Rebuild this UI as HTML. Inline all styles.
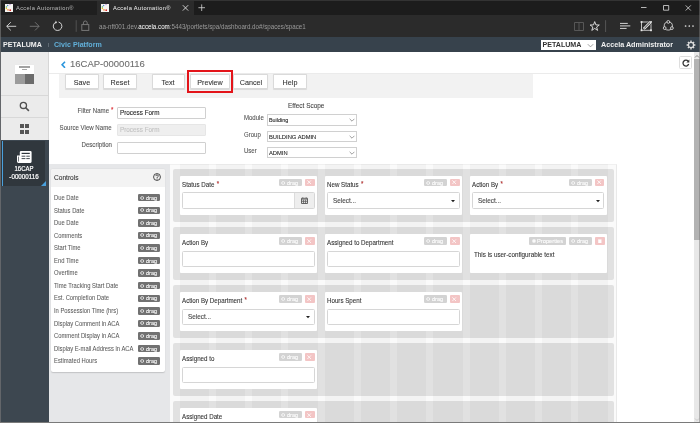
<!DOCTYPE html>
<html><head><meta charset="utf-8"><style>
*{margin:0;padding:0;box-sizing:border-box}
html,body{width:700px;height:423px;overflow:hidden;background:#fff;font-family:"Liberation Sans",sans-serif;position:relative}
.a{position:absolute}
.t{position:absolute;white-space:nowrap;line-height:1}
body{will-change:transform}
</style></head><body>
<div class="a" style="left:0.00px;top:0.00px;width:700.00px;height:15.00px;background:#1c1c1c;"></div>
<div class="a" style="left:0.00px;top:0.00px;width:700.00px;height:1.00px;background:#333;"></div>
<div class="a" style="left:1.00px;top:1.00px;width:96.00px;height:14.00px;background:#1f1f1f;"></div>
<div class="a" style="left:97.00px;top:1.00px;width:97.00px;height:14.00px;background:#2b2b2b;"></div>
<div class="a" style="left:0.00px;top:15.00px;width:700.00px;height:22.00px;background:#2b2b2b;"></div>
<div class="a" style="left:5.00px;top:4.00px;width:8.00px;height:8.00px;background:#f7f5f2;"></div>
<svg class="a" style="left:5px;top:4px" width="8" height="8" viewBox="0 0 8 8"><circle cx="2.6" cy="1.6" r="0.75" fill="#5a8ad0"/><circle cx="1.4" cy="3.0" r="0.75" fill="#4cb060"/><circle cx="1.4" cy="4.5" r="0.75" fill="#f0c020"/><circle cx="3.0" cy="5.9" r="0.8" fill="#f09040"/><circle cx="5.2" cy="6.2" r="0.85" fill="#e02020"/><circle cx="5.0" cy="0.6" r="0.6" fill="#a070d0"/></svg>
<div class="a" style="left:101.00px;top:4.00px;width:8.00px;height:8.00px;background:#f7f5f2;"></div>
<svg class="a" style="left:101px;top:4px" width="8" height="8" viewBox="0 0 8 8"><circle cx="2.6" cy="1.6" r="0.75" fill="#5a8ad0"/><circle cx="1.4" cy="3.0" r="0.75" fill="#4cb060"/><circle cx="1.4" cy="4.5" r="0.75" fill="#f0c020"/><circle cx="3.0" cy="5.9" r="0.8" fill="#f09040"/><circle cx="5.2" cy="6.2" r="0.85" fill="#e02020"/><circle cx="5.0" cy="0.6" r="0.6" fill="#a070d0"/></svg>
<div class="t" style="left:16.00px;top:5.20px;font-size:5.985px;color:#bdbdbd;font-weight:normal;transform:scaleX(0.9524);transform-origin:0 0;letter-spacing:0.38px">Accela Automation®</div>
<div class="t" style="left:112.80px;top:5.20px;font-size:5.985px;color:#f2f2f2;font-weight:normal;transform:scaleX(0.9524);transform-origin:0 0;letter-spacing:0.38px">Accela Automation®</div>
<svg class="a" style="left:0;top:0" width="700" height="37" viewBox="0 0 700 37">
<g fill="none" stroke="#dedede" stroke-width="0.9">
<path d="M182.8 5.2L188.2 10.6M188.2 5.2L182.8 10.6"/>
<path d="M201.7 4.4V11M198.4 7.7H205" stroke-width="0.75"/>
<path d="M641 7.5H646.5" stroke-width="0.8"/>
<path d="M663.5 5.5H668.7V10.2H663.5Z" stroke-width="0.8"/>
<path d="M685.7 5.4L690.8 10.5M690.8 5.4L685.7 10.5" stroke-width="0.8"/>
<path d="M16.2 26.3H6.8M10.8 22.2L6.7 26.3L10.8 30.4"/>
</g>
<path d="M29.8 26.3H39M35 22.2L39.1 26.3L35 30.4" fill="none" stroke="#767676" stroke-width="0.9"/>
<path d="M56.2 22.1A4.3 4.3 0 1 0 58.6 22.0" fill="none" stroke="#dcdcdc" stroke-width="0.95"/>
<path d="M55.3 21.2L56.8 22.2L55.6 23.6" fill="none" stroke="#dcdcdc" stroke-width="0.8"/>
<path d="M76.2 20.2V31.8" stroke="#525252" stroke-width="1"/>
<g fill="none" stroke="#7a7a7a" stroke-width="0.95"><rect x="81.8" y="24.6" width="7" height="5.8"/><path d="M83.4 24.6V22.9A1.9 1.9 0 0 1 87.2 22.9V24.6"/></g>
<g fill="none" stroke="#5c5c5c" stroke-width="0.9"><path d="M574.5 22.5H583.5V30.5H574.5ZM579 22.5V30.5"/></g>
<path d="M594.7 21.6L595.9 24.9L599.3 25L596.6 27L597.6 30.4L594.7 28.4L591.8 30.4L592.8 27L590.1 25L593.5 24.9Z" fill="none" stroke="#e8e8e8" stroke-width="0.9"/>
<path d="M605.6 20.2V32" stroke="#555" stroke-width="1"/>
<path d="M620 23.4H627.8M620 25.9H630.3M620 28.4H626.6" stroke="#e8e8e8" stroke-width="0.9"/>
<g fill="none" stroke="#e8e8e8" stroke-width="0.8"><path d="M641.5 22V30.3H651V22Z"/></g>
<g fill="#e8e8e8"><rect x="640.6" y="21.1" width="1.8" height="1.8"/><rect x="650.1" y="21.1" width="1.8" height="1.8"/><rect x="640.6" y="29.4" width="1.8" height="1.8"/><rect x="650.1" y="29.4" width="1.8" height="1.8"/></g>
<path d="M643.8 28.8L650.6 22" stroke="#2b2b2b" stroke-width="3.6"/>
<path d="M643.8 28.8L650.6 22" stroke="#e8e8e8" stroke-width="2.6"/>
<path d="M644.4 28.2L650 22.6" stroke="#2b2b2b" stroke-width="1"/>
<circle cx="668.3" cy="26" r="4.1" fill="none" stroke="#e8e8e8" stroke-width="0.8"/>
<g fill="#2b2b2b" stroke="#e8e8e8" stroke-width="0.8"><circle cx="668.3" cy="21.9" r="1.4"/><circle cx="664.7" cy="28.1" r="1.4"/><circle cx="671.9" cy="28.1" r="1.4"/></g>
<g fill="#e0e0e0"><circle cx="685.6" cy="26" r="0.85"/><circle cx="689.3" cy="26" r="0.85"/><circle cx="693" cy="26" r="0.85"/></g>
</svg>
<div class="t" style="left:98.60px;top:24.20px;font-size:6.542px;color:#9a9a9a;font-weight:normal;transform:scaleX(0.9524);transform-origin:0 0;">aa-nft001.dev.<span style="color:#fff">accela.com</span>:5443/portlets/spa/dashboard.do#/spaces/space1</div>
<div class="a" style="left:0.00px;top:37.00px;width:700.00px;height:15.40px;background:#37424c;"></div>
<div class="t" style="left:3.00px;top:42.20px;font-size:7.100px;color:#f0f0f0;font-weight:bold;">PETALUMA</div>
<div class="a" style="left:48.00px;top:42.50px;width:0.80px;height:4.20px;background:#5f6a73;"></div>
<div class="t" style="left:54.00px;top:42.20px;font-size:7.100px;color:#62b0da;font-weight:bold;">Civic Platform</div>
<div class="a" style="left:541.00px;top:40.00px;width:54.50px;height:9.80px;background:#fff;"></div>
<div class="t" style="left:542.50px;top:42.20px;font-size:7.100px;color:#333;font-weight:bold;">PETALUMA</div>
<svg class="a" style="left:587px;top:42.5px" width="7" height="5" viewBox="0 0 7 5"><path d="M0.8 1.2L3.5 3.9L6.2 1.2" fill="none" stroke="#888" stroke-width="0.8"/></svg>
<div class="t" style="left:601.00px;top:41.20px;font-size:7.200px;color:#f0f0f0;font-weight:bold;">Accela Administrator</div>
<svg class="a" style="left:685.6px;top:40px" width="10" height="10" viewBox="0 0 10 10"><g fill="none" stroke="#dcdcdc"><circle cx="5" cy="5" r="2.6" stroke-width="1.3"/><path d="M5 0.6V2.2M5 7.8V9.4M0.6 5H2.2M7.8 5H9.4M1.9 1.9L3.1 3.1M6.9 6.9L8.1 8.1M1.9 8.1L3.1 6.9M6.9 3.1L8.1 1.9" stroke-width="1.4"/></g></svg>
<div class="a" style="left:0.00px;top:52.00px;width:49.00px;height:370.00px;background:#3d4750;"></div>
<div class="a" style="left:1.00px;top:52.00px;width:47.50px;height:87.50px;background:#ebebeb;"></div>
<div class="a" style="left:48.00px;top:52.00px;width:1.00px;height:87.50px;background:#d6d6d6;"></div>
<div class="a" style="left:1.00px;top:95.00px;width:47.00px;height:1.00px;background:#d8d8d8;"></div>
<div class="a" style="left:1.00px;top:117.00px;width:47.00px;height:1.00px;background:#d8d8d8;"></div>
<div class="a" style="left:15.00px;top:64.60px;width:19.40px;height:19.60px;background:#fff;box-shadow:0 0 0.5px rgba(0,0,0,.15)"></div>
<div class="a" style="left:15.00px;top:73.90px;width:9.70px;height:10.30px;background:#9b9b9b;"></div>
<div class="a" style="left:24.70px;top:73.90px;width:9.70px;height:10.30px;background:#6b6b6b;"></div>
<div class="a" style="left:19.20px;top:66.30px;width:11.00px;height:1.50px;background:#a2a2a2;"></div>
<div class="a" style="left:22.00px;top:69.40px;width:5.40px;height:0.90px;background:#a8a8a8;"></div>
<svg class="a" style="left:19px;top:101px" width="11" height="11" viewBox="0 0 11 11"><circle cx="4.4" cy="4.4" r="3.1" fill="none" stroke="#505050" stroke-width="1.3"/><path d="M6.7 6.7L9.9 9.9" stroke="#505050" stroke-width="1.6"/></svg>
<div class="a" style="left:20.00px;top:124.20px;width:4.00px;height:4.00px;background:#555;"></div>
<div class="a" style="left:20.00px;top:129.60px;width:4.00px;height:4.00px;background:#555;"></div>
<div class="a" style="left:25.40px;top:124.20px;width:4.00px;height:4.00px;background:#555;"></div>
<div class="a" style="left:25.40px;top:129.60px;width:4.00px;height:4.00px;background:#555;"></div>
<div class="a" style="left:1.00px;top:141.00px;width:44.00px;height:45.00px;background:#30373d;"></div>
<div class="a" style="left:1.50px;top:141.00px;width:1.60px;height:45.00px;background:#4aa0dc;"></div>
<svg class="a" style="left:40.5px;top:181px" width="5" height="5" viewBox="0 0 5 5"><path d="M5 0V5H0Z" fill="#4aa0dc"/></svg>
<svg class="a" style="left:16.8px;top:150.9px" width="15" height="12" viewBox="0 0 15 12"><path d="M2.8 1.3Q2.8 0 4.1 0H13.4Q14.6 0 14.6 1.3V10.6Q14.6 11.9 13.4 11.9H1.4Q0 11.9 0 10.5V4.6H2.8Z" fill="#fff"/><path d="M4.6 2.4H12.8" stroke="#30373d" stroke-width="1.2"/><path d="M4.6 5.2H8.4M9.3 5.2H12.8M4.6 7.6H8.4M9.3 7.6H12.8" stroke="#30373d" stroke-width="0.9"/><path d="M1.5 5.6V10.5" stroke="#30373d" stroke-width="0.7"/></svg>
<div class="t" style="left:-76.50px;width:200px;text-align:center;top:166.20px;font-size:6.300px;color:#fff;font-weight:normal;transform:scaleX(0.9524);transform-origin:50% 0;-webkit-text-stroke:0.2px #fff;">16CAP</div>
<div class="t" style="left:-75.90px;width:200px;text-align:center;top:174.20px;font-size:6.542px;color:#fff;font-weight:normal;transform:scaleX(0.9524);transform-origin:50% 0;-webkit-text-stroke:0.2px #fff;">-00000116</div>
<div class="a" style="left:49.00px;top:163.60px;width:121.00px;height:258.00px;background:#e6e7e9;"></div>
<svg class="a" style="left:59.5px;top:60.5px" width="7" height="7.5" viewBox="0 0 7 7.5"><path d="M5.0 0.7L2.1 3.75L5.0 6.8" fill="none" stroke="#2a95dc" stroke-width="1.6"/></svg>
<div class="t" style="left:70.00px;top:59.20px;font-size:9.500px;color:#6e6e6e;font-weight:normal;-webkit-text-stroke:0.1px #6e6e6e;">16CAP-00000116</div>
<div class="a" style="left:49.00px;top:73.00px;width:644.00px;height:1.00px;background:#ebebeb;"></div>
<div class="a" style="left:679.20px;top:56.30px;width:12.70px;height:12.70px;background:#fff;border:1px solid #dedede;border-radius:1.5px"></div>
<svg class="a" style="left:681.7px;top:59px" width="8" height="8" viewBox="0 0 8 8"><path d="M6.2 2.3A2.9 2.9 0 1 0 6.7 5" fill="none" stroke="#333" stroke-width="1.25"/><path d="M7.3 0.5V3.4H4.4Z" fill="#333"/></svg>
<div class="a" style="left:693.50px;top:52.00px;width:6.50px;height:370.00px;background:#e8e8e8;"></div>
<div class="a" style="left:693.80px;top:59.00px;width:6.20px;height:181.00px;background:#b3b3b3;"></div>
<svg class="a" style="left:694px;top:53.5px" width="6" height="5" viewBox="0 0 6 5"><path d="M1 3.5L3 1.5L5 3.5" fill="none" stroke="#6a6a6a" stroke-width="0.8"/></svg>
<svg class="a" style="left:694px;top:416.8px" width="6" height="5" viewBox="0 0 6 5"><path d="M1 1.5L3 3.5L5 1.5" fill="none" stroke="#bbb" stroke-width="0.7"/></svg>
<div class="a" style="left:59.00px;top:73.50px;width:474.00px;height:24.00px;background:#f2f2f2;"></div>
<div class="a" style="left:64.5px;top:74px;width:34.10px;height:15.2px;background:#fff;border:1px solid #dadada;border-radius:1px;box-shadow:0 0.6px 0.8px rgba(0,0,0,.10)"></div>
<div class="t" style="left:-18.45px;width:200px;text-align:center;top:79.20px;font-size:7.560px;color:#333;font-weight:normal;transform:scaleX(0.9524);transform-origin:50% 0;-webkit-text-stroke:0.09px #333;">Save</div>
<div class="a" style="left:103.4px;top:74px;width:33.50px;height:15.2px;background:#fff;border:1px solid #dadada;border-radius:1px;box-shadow:0 0.6px 0.8px rgba(0,0,0,.10)"></div>
<div class="t" style="left:20.15px;width:200px;text-align:center;top:79.20px;font-size:7.560px;color:#333;font-weight:normal;transform:scaleX(0.9524);transform-origin:50% 0;-webkit-text-stroke:0.09px #333;">Reset</div>
<div class="a" style="left:151.5px;top:74px;width:33.70px;height:15.2px;background:#fff;border:1px solid #dadada;border-radius:1px;box-shadow:0 0.6px 0.8px rgba(0,0,0,.10)"></div>
<div class="t" style="left:68.35px;width:200px;text-align:center;top:79.20px;font-size:7.560px;color:#333;font-weight:normal;transform:scaleX(0.9524);transform-origin:50% 0;-webkit-text-stroke:0.09px #333;">Text</div>
<div class="a" style="left:190.2px;top:74px;width:40.10px;height:15.2px;background:#fff;border:1px solid #dadada;border-radius:1px;box-shadow:0 0.6px 0.8px rgba(0,0,0,.10)"></div>
<div class="t" style="left:110.25px;width:200px;text-align:center;top:79.20px;font-size:7.560px;color:#333;font-weight:normal;transform:scaleX(0.9524);transform-origin:50% 0;-webkit-text-stroke:0.09px #333;">Preview</div>
<div class="a" style="left:233.2px;top:74px;width:35.20px;height:15.2px;background:#fff;border:1px solid #dadada;border-radius:1px;box-shadow:0 0.6px 0.8px rgba(0,0,0,.10)"></div>
<div class="t" style="left:150.80px;width:200px;text-align:center;top:79.20px;font-size:7.560px;color:#333;font-weight:normal;transform:scaleX(0.9524);transform-origin:50% 0;-webkit-text-stroke:0.09px #333;">Cancel</div>
<div class="a" style="left:273.2px;top:74px;width:33.80px;height:15.2px;background:#fff;border:1px solid #dadada;border-radius:1px;box-shadow:0 0.6px 0.8px rgba(0,0,0,.10)"></div>
<div class="t" style="left:190.10px;width:200px;text-align:center;top:79.20px;font-size:7.560px;color:#333;font-weight:normal;transform:scaleX(0.9524);transform-origin:50% 0;-webkit-text-stroke:0.09px #333;">Help</div>
<div class="a" style="left:187.00px;top:69.90px;width:45.60px;height:23.60px;background:transparent;border:2px solid #e3141a"></div>
<div class="t" style="right:590.70px;top:108.20px;font-size:6.405px;color:#555;font-weight:normal;transform:scaleX(0.9524);transform-origin:100% 0;-webkit-text-stroke:0.09px #555;">Filter Name</div>
<div class="t" style="left:111.20px;top:107.20px;font-size:6.405px;color:#d9262c;font-weight:normal;transform:scaleX(0.9524);transform-origin:0 0;-webkit-text-stroke:0.09px #d9262c;">*</div>
<div class="a" style="left:117.30px;top:107.00px;width:88.60px;height:11.60px;background:#fff;border:1px solid #d0d0d0;border-radius:1px"></div>
<div class="t" style="left:119.70px;top:110.20px;font-size:6.667px;color:#222;font-weight:normal;transform:scaleX(0.9524);transform-origin:0 0;-webkit-text-stroke:0.09px #222;">Process Form</div>
<div class="t" style="right:588.00px;top:125.20px;font-size:6.405px;color:#555;font-weight:normal;transform:scaleX(0.9524);transform-origin:100% 0;-webkit-text-stroke:0.09px #555;">Source View Name</div>
<div class="a" style="left:117.30px;top:124.20px;width:88.60px;height:11.80px;background:#efefef;border:1px solid #e6e6e6;border-radius:1px"></div>
<div class="t" style="left:119.70px;top:127.20px;font-size:6.667px;color:#c2c2c2;font-weight:normal;transform:scaleX(0.9524);transform-origin:0 0;-webkit-text-stroke:0.09px #c2c2c2;">Process Form</div>
<div class="t" style="right:588.00px;top:142.20px;font-size:6.405px;color:#555;font-weight:normal;transform:scaleX(0.9524);transform-origin:100% 0;-webkit-text-stroke:0.09px #555;">Description</div>
<div class="a" style="left:117.30px;top:142.20px;width:88.60px;height:12.10px;background:#fff;border:1px solid #d0d0d0;border-radius:1px"></div>
<div class="t" style="left:288.00px;top:103.20px;font-size:6.773px;color:#444;font-weight:normal;transform:scaleX(0.9524);transform-origin:0 0;-webkit-text-stroke:0.09px #444;">Effect Scope</div>
<div class="t" style="left:244.10px;top:115.20px;font-size:6.342px;color:#555;font-weight:normal;transform:scaleX(0.9524);transform-origin:0 0;-webkit-text-stroke:0.09px #555;">Module</div>
<div class="a" style="left:266.90px;top:114.30px;width:90.00px;height:11.30px;background:#fff;border:1px solid #d0d0d0"></div>
<div class="t" style="left:268.90px;top:118.20px;font-size:5.670px;color:#222;font-weight:normal;transform:scaleX(0.9524);transform-origin:0 0;-webkit-text-stroke:0.09px #222;">Building</div>
<svg class="a" style="left:349px;top:117.95px" width="6" height="4" viewBox="0 0 6 4"><path d="M0.6 0.8L3 3.2L5.4 0.8" fill="none" stroke="#777" stroke-width="0.7"/></svg>
<div class="t" style="left:244.10px;top:132.20px;font-size:6.342px;color:#555;font-weight:normal;transform:scaleX(0.9524);transform-origin:0 0;-webkit-text-stroke:0.09px #555;">Group</div>
<div class="a" style="left:266.90px;top:131.00px;width:90.00px;height:11.30px;background:#fff;border:1px solid #d0d0d0"></div>
<div class="t" style="left:268.90px;top:134.20px;font-size:6.090px;color:#222;font-weight:normal;transform:scaleX(0.9524);transform-origin:0 0;-webkit-text-stroke:0.09px #222;">BUILDING ADMIN</div>
<svg class="a" style="left:349px;top:134.65px" width="6" height="4" viewBox="0 0 6 4"><path d="M0.6 0.8L3 3.2L5.4 0.8" fill="none" stroke="#777" stroke-width="0.7"/></svg>
<div class="t" style="left:244.10px;top:148.20px;font-size:6.342px;color:#555;font-weight:normal;transform:scaleX(0.9524);transform-origin:0 0;-webkit-text-stroke:0.09px #555;">User</div>
<div class="a" style="left:266.90px;top:147.00px;width:90.00px;height:11.40px;background:#fff;border:1px solid #d0d0d0"></div>
<div class="t" style="left:268.90px;top:150.20px;font-size:6.090px;color:#222;font-weight:normal;transform:scaleX(0.9524);transform-origin:0 0;-webkit-text-stroke:0.09px #222;">ADMIN</div>
<svg class="a" style="left:349px;top:150.70px" width="6" height="4" viewBox="0 0 6 4"><path d="M0.6 0.8L3 3.2L5.4 0.8" fill="none" stroke="#777" stroke-width="0.7"/></svg>
<div class="a" style="left:51.00px;top:168.60px;width:113.80px;height:203.40px;background:#fff;border-radius:2px;box-shadow:0 0.6px 1.2px rgba(0,0,0,.16)"></div>
<div class="a" style="left:51.00px;top:168.60px;width:113.80px;height:18.20px;background:#f3f3f3;border-radius:2px 2px 0 0"></div>
<div class="t" style="left:54.00px;top:175.20px;font-size:6.930px;color:#333;font-weight:normal;transform:scaleX(0.9524);transform-origin:0 0;-webkit-text-stroke:0.09px #333;">Controls</div>
<svg class="a" style="left:152.6px;top:173.2px" width="8" height="8" viewBox="0 0 8 8"><circle cx="4" cy="4" r="3.45" fill="none" stroke="#222" stroke-width="0.8"/><path d="M2.85 3.1A1.2 1.15 0 1 1 4.5 4.1Q4.05 4.4 4.05 5.1" fill="none" stroke="#222" stroke-width="0.8"/><circle cx="4.05" cy="6.1" r="0.5" fill="#222"/></svg>
<div class="t" style="left:54.00px;top:195.20px;font-size:6.318px;color:#5a5a5a;font-weight:normal;transform:scaleX(0.9259);transform-origin:0 0;-webkit-text-stroke:0.05px #5a5a5a;">Due Date</div>
<div class="a" style="left:138.00px;top:194.10px;width:21.90px;height:7.40px;background:#717171;border-radius:1.2px"></div>
<svg class="a" style="left:139.60px;top:195.80px" width="4.4" height="4" viewBox="0 0 4.4 4"><ellipse cx="2.2" cy="2" rx="1.6" ry="1.35" fill="none" stroke="#fff" stroke-width="0.75"/></svg>
<div class="t" style="left:146.00px;top:196.20px;font-size:5.775px;color:#fff;font-weight:normal;transform:scaleX(0.9524);transform-origin:0 0;-webkit-text-stroke:0.09px #fff;">drag</div>
<div class="t" style="left:54.00px;top:208.20px;font-size:6.318px;color:#5a5a5a;font-weight:normal;transform:scaleX(0.9259);transform-origin:0 0;-webkit-text-stroke:0.05px #5a5a5a;">Status Date</div>
<div class="a" style="left:138.00px;top:206.66px;width:21.90px;height:7.40px;background:#717171;border-radius:1.2px"></div>
<svg class="a" style="left:139.60px;top:208.36px" width="4.4" height="4" viewBox="0 0 4.4 4"><ellipse cx="2.2" cy="2" rx="1.6" ry="1.35" fill="none" stroke="#fff" stroke-width="0.75"/></svg>
<div class="t" style="left:146.00px;top:208.20px;font-size:5.775px;color:#fff;font-weight:normal;transform:scaleX(0.9524);transform-origin:0 0;-webkit-text-stroke:0.09px #fff;">drag</div>
<div class="t" style="left:54.00px;top:220.20px;font-size:6.318px;color:#5a5a5a;font-weight:normal;transform:scaleX(0.9259);transform-origin:0 0;-webkit-text-stroke:0.05px #5a5a5a;">Due Date</div>
<div class="a" style="left:138.00px;top:219.22px;width:21.90px;height:7.40px;background:#717171;border-radius:1.2px"></div>
<svg class="a" style="left:139.60px;top:220.92px" width="4.4" height="4" viewBox="0 0 4.4 4"><ellipse cx="2.2" cy="2" rx="1.6" ry="1.35" fill="none" stroke="#fff" stroke-width="0.75"/></svg>
<div class="t" style="left:146.00px;top:221.20px;font-size:5.775px;color:#fff;font-weight:normal;transform:scaleX(0.9524);transform-origin:0 0;-webkit-text-stroke:0.09px #fff;">drag</div>
<div class="t" style="left:54.00px;top:233.20px;font-size:6.318px;color:#5a5a5a;font-weight:normal;transform:scaleX(0.9259);transform-origin:0 0;-webkit-text-stroke:0.05px #5a5a5a;">Comments</div>
<div class="a" style="left:138.00px;top:231.78px;width:21.90px;height:7.40px;background:#717171;border-radius:1.2px"></div>
<svg class="a" style="left:139.60px;top:233.48px" width="4.4" height="4" viewBox="0 0 4.4 4"><ellipse cx="2.2" cy="2" rx="1.6" ry="1.35" fill="none" stroke="#fff" stroke-width="0.75"/></svg>
<div class="t" style="left:146.00px;top:233.20px;font-size:5.775px;color:#fff;font-weight:normal;transform:scaleX(0.9524);transform-origin:0 0;-webkit-text-stroke:0.09px #fff;">drag</div>
<div class="t" style="left:54.00px;top:245.20px;font-size:6.318px;color:#5a5a5a;font-weight:normal;transform:scaleX(0.9259);transform-origin:0 0;-webkit-text-stroke:0.05px #5a5a5a;">Start Time</div>
<div class="a" style="left:138.00px;top:244.34px;width:21.90px;height:7.40px;background:#717171;border-radius:1.2px"></div>
<svg class="a" style="left:139.60px;top:246.04px" width="4.4" height="4" viewBox="0 0 4.4 4"><ellipse cx="2.2" cy="2" rx="1.6" ry="1.35" fill="none" stroke="#fff" stroke-width="0.75"/></svg>
<div class="t" style="left:146.00px;top:246.20px;font-size:5.775px;color:#fff;font-weight:normal;transform:scaleX(0.9524);transform-origin:0 0;-webkit-text-stroke:0.09px #fff;">drag</div>
<div class="t" style="left:54.00px;top:258.20px;font-size:6.318px;color:#5a5a5a;font-weight:normal;transform:scaleX(0.9259);transform-origin:0 0;-webkit-text-stroke:0.05px #5a5a5a;">End Time</div>
<div class="a" style="left:138.00px;top:256.90px;width:21.90px;height:7.40px;background:#717171;border-radius:1.2px"></div>
<svg class="a" style="left:139.60px;top:258.60px" width="4.4" height="4" viewBox="0 0 4.4 4"><ellipse cx="2.2" cy="2" rx="1.6" ry="1.35" fill="none" stroke="#fff" stroke-width="0.75"/></svg>
<div class="t" style="left:146.00px;top:259.20px;font-size:5.775px;color:#fff;font-weight:normal;transform:scaleX(0.9524);transform-origin:0 0;-webkit-text-stroke:0.09px #fff;">drag</div>
<div class="t" style="left:54.00px;top:270.20px;font-size:6.318px;color:#5a5a5a;font-weight:normal;transform:scaleX(0.9259);transform-origin:0 0;-webkit-text-stroke:0.05px #5a5a5a;">Overtime</div>
<div class="a" style="left:138.00px;top:269.46px;width:21.90px;height:7.40px;background:#717171;border-radius:1.2px"></div>
<svg class="a" style="left:139.60px;top:271.16px" width="4.4" height="4" viewBox="0 0 4.4 4"><ellipse cx="2.2" cy="2" rx="1.6" ry="1.35" fill="none" stroke="#fff" stroke-width="0.75"/></svg>
<div class="t" style="left:146.00px;top:271.20px;font-size:5.775px;color:#fff;font-weight:normal;transform:scaleX(0.9524);transform-origin:0 0;-webkit-text-stroke:0.09px #fff;">drag</div>
<div class="t" style="left:54.00px;top:283.20px;font-size:6.318px;color:#5a5a5a;font-weight:normal;transform:scaleX(0.9259);transform-origin:0 0;-webkit-text-stroke:0.05px #5a5a5a;">Time Tracking Start Date</div>
<div class="a" style="left:138.00px;top:282.02px;width:21.90px;height:7.40px;background:#717171;border-radius:1.2px"></div>
<svg class="a" style="left:139.60px;top:283.72px" width="4.4" height="4" viewBox="0 0 4.4 4"><ellipse cx="2.2" cy="2" rx="1.6" ry="1.35" fill="none" stroke="#fff" stroke-width="0.75"/></svg>
<div class="t" style="left:146.00px;top:284.20px;font-size:5.775px;color:#fff;font-weight:normal;transform:scaleX(0.9524);transform-origin:0 0;-webkit-text-stroke:0.09px #fff;">drag</div>
<div class="t" style="left:54.00px;top:295.20px;font-size:6.318px;color:#5a5a5a;font-weight:normal;transform:scaleX(0.9259);transform-origin:0 0;-webkit-text-stroke:0.05px #5a5a5a;">Est. Completion Date</div>
<div class="a" style="left:138.00px;top:294.58px;width:21.90px;height:7.40px;background:#717171;border-radius:1.2px"></div>
<svg class="a" style="left:139.60px;top:296.28px" width="4.4" height="4" viewBox="0 0 4.4 4"><ellipse cx="2.2" cy="2" rx="1.6" ry="1.35" fill="none" stroke="#fff" stroke-width="0.75"/></svg>
<div class="t" style="left:146.00px;top:296.20px;font-size:5.775px;color:#fff;font-weight:normal;transform:scaleX(0.9524);transform-origin:0 0;-webkit-text-stroke:0.09px #fff;">drag</div>
<div class="t" style="left:54.00px;top:308.20px;font-size:6.318px;color:#5a5a5a;font-weight:normal;transform:scaleX(0.9259);transform-origin:0 0;-webkit-text-stroke:0.05px #5a5a5a;">In Possession Time (hrs)</div>
<div class="a" style="left:138.00px;top:307.14px;width:21.90px;height:7.40px;background:#717171;border-radius:1.2px"></div>
<svg class="a" style="left:139.60px;top:308.84px" width="4.4" height="4" viewBox="0 0 4.4 4"><ellipse cx="2.2" cy="2" rx="1.6" ry="1.35" fill="none" stroke="#fff" stroke-width="0.75"/></svg>
<div class="t" style="left:146.00px;top:309.20px;font-size:5.775px;color:#fff;font-weight:normal;transform:scaleX(0.9524);transform-origin:0 0;-webkit-text-stroke:0.09px #fff;">drag</div>
<div class="t" style="left:54.00px;top:321.20px;font-size:6.318px;color:#5a5a5a;font-weight:normal;transform:scaleX(0.9259);transform-origin:0 0;-webkit-text-stroke:0.05px #5a5a5a;">Display Comment in ACA</div>
<div class="a" style="left:138.00px;top:319.70px;width:21.90px;height:7.40px;background:#717171;border-radius:1.2px"></div>
<svg class="a" style="left:139.60px;top:321.40px" width="4.4" height="4" viewBox="0 0 4.4 4"><ellipse cx="2.2" cy="2" rx="1.6" ry="1.35" fill="none" stroke="#fff" stroke-width="0.75"/></svg>
<div class="t" style="left:146.00px;top:321.20px;font-size:5.775px;color:#fff;font-weight:normal;transform:scaleX(0.9524);transform-origin:0 0;-webkit-text-stroke:0.09px #fff;">drag</div>
<div class="t" style="left:54.00px;top:333.20px;font-size:6.318px;color:#5a5a5a;font-weight:normal;transform:scaleX(0.9259);transform-origin:0 0;-webkit-text-stroke:0.05px #5a5a5a;">Comment Display in ACA</div>
<div class="a" style="left:138.00px;top:332.26px;width:21.90px;height:7.40px;background:#717171;border-radius:1.2px"></div>
<svg class="a" style="left:139.60px;top:333.96px" width="4.4" height="4" viewBox="0 0 4.4 4"><ellipse cx="2.2" cy="2" rx="1.6" ry="1.35" fill="none" stroke="#fff" stroke-width="0.75"/></svg>
<div class="t" style="left:146.00px;top:334.20px;font-size:5.775px;color:#fff;font-weight:normal;transform:scaleX(0.9524);transform-origin:0 0;-webkit-text-stroke:0.09px #fff;">drag</div>
<div class="t" style="left:54.00px;top:346.20px;font-size:6.318px;color:#5a5a5a;font-weight:normal;transform:scaleX(0.9259);transform-origin:0 0;-webkit-text-stroke:0.05px #5a5a5a;">Display E-mail Address in ACA</div>
<div class="a" style="left:138.00px;top:344.82px;width:21.90px;height:7.40px;background:#717171;border-radius:1.2px"></div>
<svg class="a" style="left:139.60px;top:346.52px" width="4.4" height="4" viewBox="0 0 4.4 4"><ellipse cx="2.2" cy="2" rx="1.6" ry="1.35" fill="none" stroke="#fff" stroke-width="0.75"/></svg>
<div class="t" style="left:146.00px;top:347.20px;font-size:5.775px;color:#fff;font-weight:normal;transform:scaleX(0.9524);transform-origin:0 0;-webkit-text-stroke:0.09px #fff;">drag</div>
<div class="t" style="left:54.00px;top:358.20px;font-size:6.318px;color:#5a5a5a;font-weight:normal;transform:scaleX(0.9259);transform-origin:0 0;-webkit-text-stroke:0.05px #5a5a5a;">Estimated Hours</div>
<div class="a" style="left:138.00px;top:357.38px;width:21.90px;height:7.40px;background:#717171;border-radius:1.2px"></div>
<svg class="a" style="left:139.60px;top:359.08px" width="4.4" height="4" viewBox="0 0 4.4 4"><ellipse cx="2.2" cy="2" rx="1.6" ry="1.35" fill="none" stroke="#fff" stroke-width="0.75"/></svg>
<div class="t" style="left:146.00px;top:359.20px;font-size:5.775px;color:#fff;font-weight:normal;transform:scaleX(0.9524);transform-origin:0 0;-webkit-text-stroke:0.09px #fff;">drag</div>
<div class="a" style="left:170.00px;top:163.60px;width:447.00px;height:258.00px;background:#fafafa;border-right:1px solid #e9e9e9;border-top:0.5px solid #f0f0f0"></div>
<div class="a" style="left:172.70px;top:168.80px;width:441.40px;height:52.90px;background:#e1e1e1;border-radius:2px"></div>
<div class="a" style="left:172.70px;top:227.00px;width:441.40px;height:52.90px;background:#e1e1e1;border-radius:2px"></div>
<div class="a" style="left:172.70px;top:285.20px;width:441.40px;height:52.90px;background:#e1e1e1;border-radius:2px"></div>
<div class="a" style="left:172.70px;top:343.30px;width:441.40px;height:52.90px;background:#e1e1e1;border-radius:2px"></div>
<div class="a" style="left:172.70px;top:400.90px;width:441.40px;height:52.90px;background:#e1e1e1;border-radius:2px"></div>
<div class="a" style="left:179.70px;top:163.60px;width:29.24px;height:258.00px;background:rgba(0,0,0,0.026);"></div>
<div class="a" style="left:215.94px;top:163.60px;width:29.24px;height:258.00px;background:rgba(0,0,0,0.026);"></div>
<div class="a" style="left:252.18px;top:163.60px;width:29.24px;height:258.00px;background:rgba(0,0,0,0.026);"></div>
<div class="a" style="left:288.42px;top:163.60px;width:29.24px;height:258.00px;background:rgba(0,0,0,0.026);"></div>
<div class="a" style="left:324.66px;top:163.60px;width:29.24px;height:258.00px;background:rgba(0,0,0,0.026);"></div>
<div class="a" style="left:360.90px;top:163.60px;width:29.24px;height:258.00px;background:rgba(0,0,0,0.026);"></div>
<div class="a" style="left:397.14px;top:163.60px;width:29.24px;height:258.00px;background:rgba(0,0,0,0.026);"></div>
<div class="a" style="left:433.38px;top:163.60px;width:29.24px;height:258.00px;background:rgba(0,0,0,0.026);"></div>
<div class="a" style="left:469.62px;top:163.60px;width:29.24px;height:258.00px;background:rgba(0,0,0,0.026);"></div>
<div class="a" style="left:505.86px;top:163.60px;width:29.24px;height:258.00px;background:rgba(0,0,0,0.026);"></div>
<div class="a" style="left:542.10px;top:163.60px;width:29.24px;height:258.00px;background:rgba(0,0,0,0.026);"></div>
<div class="a" style="left:578.34px;top:163.60px;width:29.24px;height:258.00px;background:rgba(0,0,0,0.026);"></div>
<div class="a" style="left:179.90px;top:175.90px;width:137.26px;height:38.70px;background:#fff;border-radius:1px"></div>
<div class="t" style="left:181.80px;top:182.20px;font-size:6.510px;color:#333;font-weight:normal;transform:scaleX(0.9524);transform-origin:0 0;-webkit-text-stroke:0.09px #333;">Status Date <span style="color:#e22;position:relative;top:-0.8px;margin-left:0.6px">*</span></div>
<div class="a" style="left:279.26px;top:178.80px;width:22.60px;height:7.60px;background:#d3d3d3;border-radius:1.2px"></div>
<svg class="a" style="left:280.86px;top:180.60px" width="4.4" height="4" viewBox="0 0 4.4 4"><ellipse cx="2.2" cy="2" rx="1.6" ry="1.35" fill="none" stroke="#fff" stroke-width="0.75"/></svg>
<div class="t" style="left:287.26px;top:181.20px;font-size:5.775px;color:#fff;font-weight:normal;transform:scaleX(0.9524);transform-origin:0 0;-webkit-text-stroke:0.09px #fff;">drag</div>
<div class="a" style="left:304.76px;top:178.80px;width:9.8px;height:7.6px;background:#f3c5c5;border-radius:1px"></div>
<svg class="a" style="left:307.46px;top:180.40px" width="4.4" height="4.4" viewBox="0 0 4.4 4.4"><path d="M0.4 0.4L4 4M4 0.4L0.4 4" stroke="#fff" stroke-width="0.8"/></svg>
<div class="a" style="left:182.10px;top:192.40px;width:132.46px;height:16.40px;background:#fff;border:1px solid #d6d6d6;border-radius:1.5px"></div>
<div class="a" style="left:294.06px;top:193.40px;width:19.50px;height:14.40px;background:#eeeeee;border-left:1px solid #dcdcdc"></div>
<svg class="a" style="left:301.36px;top:197.00px" width="7" height="7" viewBox="0 0 7 7"><path d="M0.5 1.3H6.5V6.5H0.5Z" fill="none" stroke="#555" stroke-width="0.9"/><path d="M0.5 2.8H6.5M2.5 2.8V6.5M4.5 2.8V6.5M0.5 4.6H6.5M1.8 0.2V1.6M5.2 0.2V1.6" stroke="#555" stroke-width="0.7"/></svg>
<div class="a" style="left:324.86px;top:175.90px;width:137.26px;height:38.70px;background:#fff;border-radius:1px"></div>
<div class="t" style="left:326.76px;top:182.20px;font-size:6.510px;color:#333;font-weight:normal;transform:scaleX(0.9524);transform-origin:0 0;-webkit-text-stroke:0.09px #333;">New Status <span style="color:#e22;position:relative;top:-0.8px;margin-left:0.6px">*</span></div>
<div class="a" style="left:424.22px;top:178.80px;width:22.60px;height:7.60px;background:#d3d3d3;border-radius:1.2px"></div>
<svg class="a" style="left:425.82px;top:180.60px" width="4.4" height="4" viewBox="0 0 4.4 4"><ellipse cx="2.2" cy="2" rx="1.6" ry="1.35" fill="none" stroke="#fff" stroke-width="0.75"/></svg>
<div class="t" style="left:432.22px;top:181.20px;font-size:5.775px;color:#fff;font-weight:normal;transform:scaleX(0.9524);transform-origin:0 0;-webkit-text-stroke:0.09px #fff;">drag</div>
<div class="a" style="left:449.72px;top:178.80px;width:9.8px;height:7.6px;background:#f3c5c5;border-radius:1px"></div>
<svg class="a" style="left:452.42px;top:180.40px" width="4.4" height="4.4" viewBox="0 0 4.4 4.4"><path d="M0.4 0.4L4 4M4 0.4L0.4 4" stroke="#fff" stroke-width="0.8"/></svg>
<div class="a" style="left:327.06px;top:192.40px;width:132.46px;height:16.40px;background:#fff;border:1px solid #d6d6d6;border-radius:1.5px"></div>
<div class="t" style="left:333.26px;top:198.20px;font-size:6.720px;color:#444;font-weight:normal;transform:scaleX(0.9524);transform-origin:0 0;-webkit-text-stroke:0.09px #444;">Select...</div>
<svg class="a" style="left:450.72px;top:200.00px" width="4" height="3" viewBox="0 0 4 3"><path d="M0 0H4L2 2.2Z" fill="#222"/></svg>
<div class="a" style="left:469.82px;top:175.90px;width:137.26px;height:38.70px;background:#fff;border-radius:1px"></div>
<div class="t" style="left:471.72px;top:182.20px;font-size:6.510px;color:#333;font-weight:normal;transform:scaleX(0.9524);transform-origin:0 0;-webkit-text-stroke:0.09px #333;">Action By <span style="color:#e22;position:relative;top:-0.8px;margin-left:0.6px">*</span></div>
<div class="a" style="left:569.18px;top:178.80px;width:22.60px;height:7.60px;background:#d3d3d3;border-radius:1.2px"></div>
<svg class="a" style="left:570.78px;top:180.60px" width="4.4" height="4" viewBox="0 0 4.4 4"><ellipse cx="2.2" cy="2" rx="1.6" ry="1.35" fill="none" stroke="#fff" stroke-width="0.75"/></svg>
<div class="t" style="left:577.18px;top:181.20px;font-size:5.775px;color:#fff;font-weight:normal;transform:scaleX(0.9524);transform-origin:0 0;-webkit-text-stroke:0.09px #fff;">drag</div>
<div class="a" style="left:594.68px;top:178.80px;width:9.8px;height:7.6px;background:#f3c5c5;border-radius:1px"></div>
<svg class="a" style="left:597.38px;top:180.40px" width="4.4" height="4.4" viewBox="0 0 4.4 4.4"><path d="M0.4 0.4L4 4M4 0.4L0.4 4" stroke="#fff" stroke-width="0.8"/></svg>
<div class="a" style="left:472.02px;top:192.40px;width:132.46px;height:16.40px;background:#fff;border:1px solid #d6d6d6;border-radius:1.5px"></div>
<div class="t" style="left:478.22px;top:198.20px;font-size:6.720px;color:#444;font-weight:normal;transform:scaleX(0.9524);transform-origin:0 0;-webkit-text-stroke:0.09px #444;">Select...</div>
<svg class="a" style="left:595.68px;top:200.00px" width="4" height="3" viewBox="0 0 4 3"><path d="M0 0H4L2 2.2Z" fill="#222"/></svg>
<div class="a" style="left:179.90px;top:234.10px;width:137.26px;height:38.70px;background:#fff;border-radius:1px"></div>
<div class="t" style="left:181.80px;top:240.20px;font-size:6.510px;color:#333;font-weight:normal;transform:scaleX(0.9524);transform-origin:0 0;-webkit-text-stroke:0.09px #333;">Action By</div>
<div class="a" style="left:279.26px;top:237.00px;width:22.60px;height:7.60px;background:#d3d3d3;border-radius:1.2px"></div>
<svg class="a" style="left:280.86px;top:238.80px" width="4.4" height="4" viewBox="0 0 4.4 4"><ellipse cx="2.2" cy="2" rx="1.6" ry="1.35" fill="none" stroke="#fff" stroke-width="0.75"/></svg>
<div class="t" style="left:287.26px;top:239.20px;font-size:5.775px;color:#fff;font-weight:normal;transform:scaleX(0.9524);transform-origin:0 0;-webkit-text-stroke:0.09px #fff;">drag</div>
<div class="a" style="left:304.76px;top:237.00px;width:9.8px;height:7.6px;background:#f3c5c5;border-radius:1px"></div>
<svg class="a" style="left:307.46px;top:238.60px" width="4.4" height="4.4" viewBox="0 0 4.4 4.4"><path d="M0.4 0.4L4 4M4 0.4L0.4 4" stroke="#fff" stroke-width="0.8"/></svg>
<div class="a" style="left:182.10px;top:250.60px;width:132.46px;height:16.40px;background:#fff;border:1px solid #d6d6d6;border-radius:1.5px"></div>
<div class="a" style="left:324.86px;top:234.10px;width:137.26px;height:38.70px;background:#fff;border-radius:1px"></div>
<div class="t" style="left:326.76px;top:240.20px;font-size:6.510px;color:#333;font-weight:normal;transform:scaleX(0.9524);transform-origin:0 0;-webkit-text-stroke:0.09px #333;">Assigned to Department</div>
<div class="a" style="left:424.22px;top:237.00px;width:22.60px;height:7.60px;background:#d3d3d3;border-radius:1.2px"></div>
<svg class="a" style="left:425.82px;top:238.80px" width="4.4" height="4" viewBox="0 0 4.4 4"><ellipse cx="2.2" cy="2" rx="1.6" ry="1.35" fill="none" stroke="#fff" stroke-width="0.75"/></svg>
<div class="t" style="left:432.22px;top:239.20px;font-size:5.775px;color:#fff;font-weight:normal;transform:scaleX(0.9524);transform-origin:0 0;-webkit-text-stroke:0.09px #fff;">drag</div>
<div class="a" style="left:449.72px;top:237.00px;width:9.8px;height:7.6px;background:#f3c5c5;border-radius:1px"></div>
<svg class="a" style="left:452.42px;top:238.60px" width="4.4" height="4.4" viewBox="0 0 4.4 4.4"><path d="M0.4 0.4L4 4M4 0.4L0.4 4" stroke="#fff" stroke-width="0.8"/></svg>
<div class="a" style="left:327.06px;top:250.60px;width:132.46px;height:16.40px;background:#fff;border:1px solid #d6d6d6;border-radius:1.5px"></div>
<div class="a" style="left:469.82px;top:234.10px;width:137.26px;height:38.70px;background:#fff;border-radius:1px"></div>
<div class="a" style="left:529.38px;top:237.00px;width:37px;height:7.6px;background:#d3d3d3;border-radius:1px"></div>
<svg class="a" style="left:531.58px;top:238.80px" width="4" height="4" viewBox="0 0 4 4"><circle cx="2" cy="2" r="1.2" fill="none" stroke="#fff" stroke-width="0.9"/><path d="M2 0V4M0 2H4M0.6 0.6L3.4 3.4M3.4 0.6L0.6 3.4" stroke="#fff" stroke-width="0.5"/></svg>
<div class="t" style="left:537.18px;top:238.20px;font-size:6.038px;color:#fff;font-weight:normal;transform:scaleX(0.9524);transform-origin:0 0;-webkit-text-stroke:0.09px #fff;">Properties</div>
<div class="a" style="left:569.38px;top:237.00px;width:22.40px;height:7.60px;background:#d3d3d3;border-radius:1.2px"></div>
<svg class="a" style="left:570.98px;top:238.80px" width="4.4" height="4" viewBox="0 0 4.4 4"><ellipse cx="2.2" cy="2" rx="1.6" ry="1.35" fill="none" stroke="#fff" stroke-width="0.75"/></svg>
<div class="t" style="left:577.38px;top:239.20px;font-size:5.775px;color:#fff;font-weight:normal;transform:scaleX(0.9524);transform-origin:0 0;-webkit-text-stroke:0.09px #fff;">drag</div>
<div class="a" style="left:595.08px;top:237.00px;width:9.7px;height:7.6px;background:#f3c5c5;border-radius:1px"></div>
<svg class="a" style="left:598.08px;top:238.60px" width="3.6" height="4.4" viewBox="0 0 3.6 4.4"><path d="M0 0.5H3.6M0.4 1.1H3.2V4.4H0.4Z" fill="#fff" stroke="#fff" stroke-width="0.5"/></svg>
<div class="t" style="left:474.32px;top:252.20px;font-size:6.615px;color:#333;font-weight:normal;transform:scaleX(0.9524);transform-origin:0 0;-webkit-text-stroke:0.09px #333;">This is user-configurable text</div>
<div class="a" style="left:179.90px;top:292.30px;width:137.26px;height:38.70px;background:#fff;border-radius:1px"></div>
<div class="t" style="left:181.80px;top:298.20px;font-size:6.510px;color:#333;font-weight:normal;transform:scaleX(0.9524);transform-origin:0 0;-webkit-text-stroke:0.09px #333;">Action By Department <span style="color:#e22;position:relative;top:-0.8px;margin-left:0.6px">*</span></div>
<div class="a" style="left:279.26px;top:295.20px;width:22.60px;height:7.60px;background:#d3d3d3;border-radius:1.2px"></div>
<svg class="a" style="left:280.86px;top:297.00px" width="4.4" height="4" viewBox="0 0 4.4 4"><ellipse cx="2.2" cy="2" rx="1.6" ry="1.35" fill="none" stroke="#fff" stroke-width="0.75"/></svg>
<div class="t" style="left:287.26px;top:297.20px;font-size:5.775px;color:#fff;font-weight:normal;transform:scaleX(0.9524);transform-origin:0 0;-webkit-text-stroke:0.09px #fff;">drag</div>
<div class="a" style="left:304.76px;top:295.20px;width:9.8px;height:7.6px;background:#f3c5c5;border-radius:1px"></div>
<svg class="a" style="left:307.46px;top:296.80px" width="4.4" height="4.4" viewBox="0 0 4.4 4.4"><path d="M0.4 0.4L4 4M4 0.4L0.4 4" stroke="#fff" stroke-width="0.8"/></svg>
<div class="a" style="left:182.10px;top:308.80px;width:132.46px;height:16.40px;background:#fff;border:1px solid #d6d6d6;border-radius:1.5px"></div>
<div class="t" style="left:188.30px;top:314.20px;font-size:6.720px;color:#444;font-weight:normal;transform:scaleX(0.9524);transform-origin:0 0;-webkit-text-stroke:0.09px #444;">Select...</div>
<svg class="a" style="left:305.76px;top:316.40px" width="4" height="3" viewBox="0 0 4 3"><path d="M0 0H4L2 2.2Z" fill="#222"/></svg>
<div class="a" style="left:324.86px;top:292.30px;width:137.26px;height:38.70px;background:#fff;border-radius:1px"></div>
<div class="t" style="left:326.76px;top:298.20px;font-size:6.510px;color:#333;font-weight:normal;transform:scaleX(0.9524);transform-origin:0 0;-webkit-text-stroke:0.09px #333;">Hours Spent</div>
<div class="a" style="left:424.22px;top:295.20px;width:22.60px;height:7.60px;background:#d3d3d3;border-radius:1.2px"></div>
<svg class="a" style="left:425.82px;top:297.00px" width="4.4" height="4" viewBox="0 0 4.4 4"><ellipse cx="2.2" cy="2" rx="1.6" ry="1.35" fill="none" stroke="#fff" stroke-width="0.75"/></svg>
<div class="t" style="left:432.22px;top:297.20px;font-size:5.775px;color:#fff;font-weight:normal;transform:scaleX(0.9524);transform-origin:0 0;-webkit-text-stroke:0.09px #fff;">drag</div>
<div class="a" style="left:449.72px;top:295.20px;width:9.8px;height:7.6px;background:#f3c5c5;border-radius:1px"></div>
<svg class="a" style="left:452.42px;top:296.80px" width="4.4" height="4.4" viewBox="0 0 4.4 4.4"><path d="M0.4 0.4L4 4M4 0.4L0.4 4" stroke="#fff" stroke-width="0.8"/></svg>
<div class="a" style="left:327.06px;top:308.80px;width:132.46px;height:16.40px;background:#fff;border:1px solid #d6d6d6;border-radius:1.5px"></div>
<div class="a" style="left:179.90px;top:350.40px;width:137.26px;height:38.70px;background:#fff;border-radius:1px"></div>
<div class="t" style="left:181.80px;top:356.20px;font-size:6.510px;color:#333;font-weight:normal;transform:scaleX(0.9524);transform-origin:0 0;-webkit-text-stroke:0.09px #333;">Assigned to</div>
<div class="a" style="left:279.26px;top:353.30px;width:22.60px;height:7.60px;background:#d3d3d3;border-radius:1.2px"></div>
<svg class="a" style="left:280.86px;top:355.10px" width="4.4" height="4" viewBox="0 0 4.4 4"><ellipse cx="2.2" cy="2" rx="1.6" ry="1.35" fill="none" stroke="#fff" stroke-width="0.75"/></svg>
<div class="t" style="left:287.26px;top:355.20px;font-size:5.775px;color:#fff;font-weight:normal;transform:scaleX(0.9524);transform-origin:0 0;-webkit-text-stroke:0.09px #fff;">drag</div>
<div class="a" style="left:304.76px;top:353.30px;width:9.8px;height:7.6px;background:#f3c5c5;border-radius:1px"></div>
<svg class="a" style="left:307.46px;top:354.90px" width="4.4" height="4.4" viewBox="0 0 4.4 4.4"><path d="M0.4 0.4L4 4M4 0.4L0.4 4" stroke="#fff" stroke-width="0.8"/></svg>
<div class="a" style="left:182.10px;top:366.90px;width:132.46px;height:16.40px;background:#fff;border:1px solid #d6d6d6;border-radius:1.5px"></div>
<div class="a" style="left:179.90px;top:408.00px;width:137.26px;height:38.70px;background:#fff;border-radius:1px"></div>
<div class="t" style="left:181.80px;top:414.20px;font-size:6.510px;color:#333;font-weight:normal;transform:scaleX(0.9524);transform-origin:0 0;-webkit-text-stroke:0.09px #333;">Assigned Date</div>
<div class="a" style="left:279.26px;top:410.90px;width:22.60px;height:7.60px;background:#d3d3d3;border-radius:1.2px"></div>
<svg class="a" style="left:280.86px;top:412.70px" width="4.4" height="4" viewBox="0 0 4.4 4"><ellipse cx="2.2" cy="2" rx="1.6" ry="1.35" fill="none" stroke="#fff" stroke-width="0.75"/></svg>
<div class="t" style="left:287.26px;top:413.20px;font-size:5.775px;color:#fff;font-weight:normal;transform:scaleX(0.9524);transform-origin:0 0;-webkit-text-stroke:0.09px #fff;">drag</div>
<div class="a" style="left:304.76px;top:410.90px;width:9.8px;height:7.6px;background:#f3c5c5;border-radius:1px"></div>
<svg class="a" style="left:307.46px;top:412.50px" width="4.4" height="4.4" viewBox="0 0 4.4 4.4"><path d="M0.4 0.4L4 4M4 0.4L0.4 4" stroke="#fff" stroke-width="0.8"/></svg>
<div class="a" style="left:182.10px;top:424.50px;width:132.46px;height:16.40px;background:#fff;border:1px solid #d6d6d6;border-radius:1.5px"></div>
<div class="a" style="left:0.00px;top:421.50px;width:700.00px;height:1.50px;background:#7a7a7a;"></div>
<div class="a" style="left:0.00px;top:0.00px;width:1.00px;height:423.00px;background:rgba(120,120,120,0.65);"></div>
<div class="a" style="left:699.30px;top:0.00px;width:0.70px;height:423.00px;background:rgba(120,120,120,0.5);"></div>
</body></html>
